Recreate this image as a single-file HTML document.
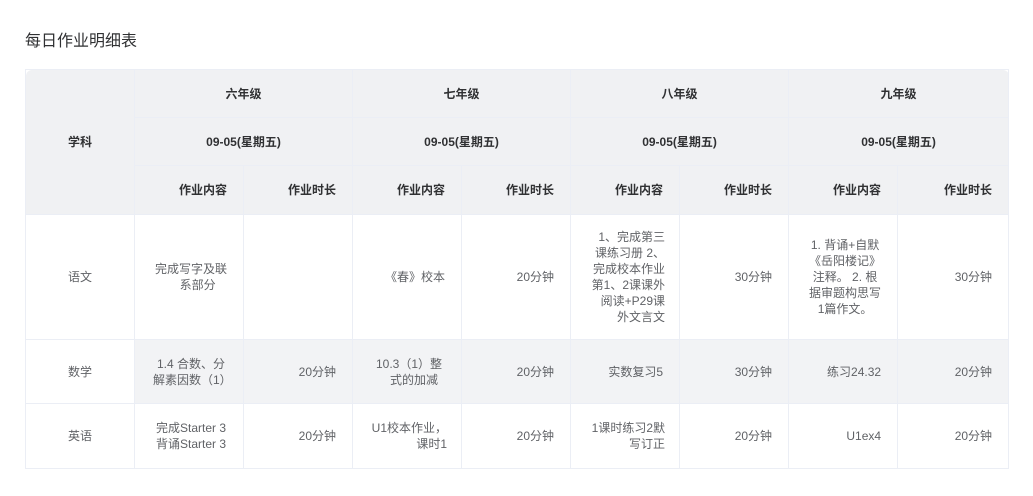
<!DOCTYPE html>
<html><head><meta charset="utf-8"><style>
body{margin:0;background:#fff;font-family:"Liberation Sans","Noto Sans CJK SC",sans-serif;}
.t{position:absolute;left:25px;top:27px;font-size:16px;color:#303133;}
table{position:absolute;left:25px;top:69px;border-collapse:collapse;table-layout:fixed;width:983px;font-size:12px;color:#606266;}
td,th{border:1px solid #ebeef5;padding:0;line-height:16px;}
th{background:#f0f1f3;color:#303133;font-weight:bold;}
.r{text-align:right;padding-right:16px;}
.c{text-align:center;padding:0 14px 0 18px;}
.g td{background:#f2f3f5;}
.g td.w{background:#fff;}
</style></head><body>
<div class="t">每日作业明细表</div>
<table>
<colgroup><col style="width:109px"><col style="width:109px"><col style="width:109px"><col style="width:109px"><col style="width:109px"><col style="width:109px"><col style="width:109px"><col style="width:109px"><col style="width:111px"></colgroup>
<tr style="height:48px"><th rowspan="3" style="border-top-left-radius:6px">学科</th><th colspan="2">六年级</th><th colspan="2">七年级</th><th colspan="2">八年级</th><th colspan="2" style="border-top-right-radius:6px">九年级</th></tr>
<tr style="height:48px"><th colspan="2">09-05(星期五)</th><th colspan="2">09-05(星期五)</th><th colspan="2">09-05(星期五)</th><th colspan="2">09-05(星期五)</th></tr>
<tr style="height:49px"><th class="r">作业内容</th><th class="r">作业时长</th><th class="r">作业内容</th><th class="r">作业时长</th><th class="r">作业内容</th><th class="r">作业时长</th><th class="r">作业内容</th><th class="r">作业时长</th></tr>
<tr style="height:125px"><td style="text-align:center">语文</td><td class="c">完成写字及联<br>&nbsp;&nbsp;&nbsp;&nbsp;系部分</td><td></td><td class="r">《春》校本</td><td class="r">20分钟</td><td class="c" style="text-align:right">1、完成第三<br>课练习册 2、<br>完成校本作业<br>第1、2课课外<br>阅读+P29课<br>外文言文</td><td class="r">30分钟</td><td class="c">1. 背诵+自默<br>《岳阳楼记》<br>注释。 2. 根<br>据审题构思写<br>1篇作文。</td><td class="r">30分钟</td></tr>
<tr class="g" style="height:64px"><td class="w" style="text-align:center">数学</td><td class="c">1.4 合数、分<br>解素因数（1）</td><td class="r">20分钟</td><td class="c">10.3（1）整<br>&nbsp;&nbsp;&nbsp;式的加减</td><td class="r">20分钟</td><td class="r">实数复习5</td><td class="r">30分钟</td><td class="r">练习24.32</td><td class="r">20分钟</td></tr>
<tr style="height:65px"><td style="text-align:center">英语</td><td class="c">完成Starter 3<br>背诵Starter 3</td><td class="r">20分钟</td><td class="c" style="text-align:right">U1校本作业，<br>课时1</td><td class="r">20分钟</td><td class="c" style="text-align:right">1课时练习2默<br>写订正</td><td class="r">20分钟</td><td class="r">U1ex4</td><td class="r">20分钟</td></tr>
</table>
</body></html>
